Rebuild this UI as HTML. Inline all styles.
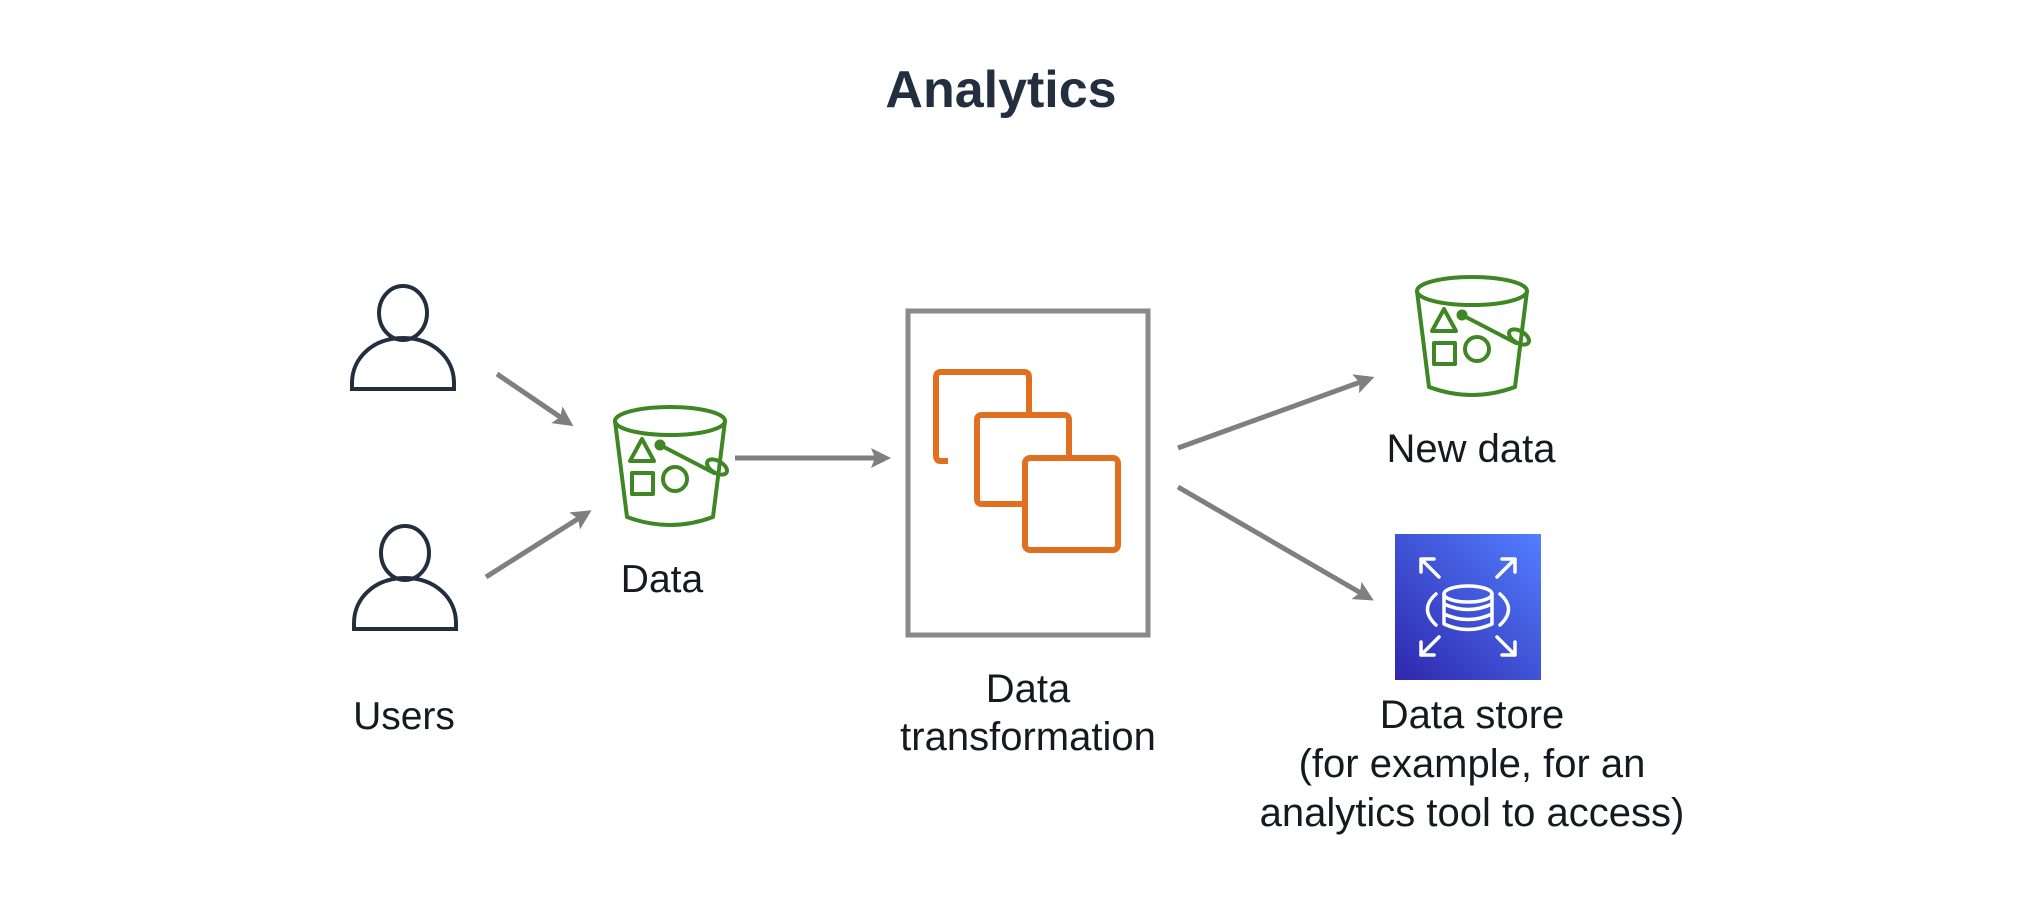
<!DOCTYPE html>
<html><head><meta charset="utf-8"><style>
html,body{margin:0;padding:0;background:#fff;width:2036px;height:909px;overflow:hidden}
svg{display:block}
text{font-family:"Liberation Sans",sans-serif;fill:#16191f}
</style></head><body>
<svg width="2036" height="909" viewBox="0 0 2036 909" xmlns="http://www.w3.org/2000/svg">
<defs>
<marker id="ah" markerWidth="4" markerHeight="4" refX="2.2" refY="2" orient="auto" markerUnits="strokeWidth">
<path d="M0,0 L4,2 L0,4 L0.8,2 Z" fill="#7f7f7f"/></marker>
<linearGradient id="bg" x1="0" y1="1" x2="1" y2="0">
<stop offset="0" stop-color="#2e27ad"/><stop offset="1" stop-color="#527fff"/></linearGradient>
<g id="bucket" fill="none" stroke="#3f8624" stroke-width="4" stroke-linejoin="round" stroke-linecap="round">
<ellipse cx="58" cy="16" rx="55" ry="14"/>
<path d="M3,16 L15,112 Q58,128 101,112 L113,16"/>
<path d="M30,34 L18,56 L42,56 Z"/>
<rect x="20" y="68" width="21" height="21"/>
<circle cx="63" cy="74" r="12"/>
<circle cx="48" cy="40" r="3.5" fill="#3f8624"/>
<path d="M48,40 L102,68"/>
<ellipse cx="105" cy="62" rx="11" ry="6" transform="rotate(30 105 62)"/>
</g>
<g id="user" fill="none" stroke="#232f3e" stroke-width="4">
<ellipse cx="0" cy="0" rx="24" ry="27"/>
<path d="M-51,76 L51,76 L51,70 C51,45 30,25 0,25 C-30,25 -51,45 -51,70 Z"/>
</g>
</defs>

<text x="1001" y="107" text-anchor="middle" font-size="52" font-weight="bold" style="fill:#232f3e">Analytics</text>

<use href="#user" x="403" y="313"/>
<use href="#user" x="405" y="553"/>
<text x="404" y="729" text-anchor="middle" font-size="39">Users</text>

<g stroke="#7f7f7f" stroke-width="5" fill="none" marker-end="url(#ah)">
<line x1="497" y1="374" x2="566" y2="421"/>
<line x1="486" y1="577" x2="584" y2="515"/>
<line x1="735" y1="458" x2="882" y2="458"/>
<line x1="1178" y1="448" x2="1366" y2="380"/>
<line x1="1178" y1="487" x2="1366" y2="596"/>
</g>

<use href="#bucket" x="612" y="405"/>
<text x="662" y="592" text-anchor="middle" font-size="39">Data</text>

<rect x="908" y="311" width="240" height="324" fill="none" stroke="#8a8a8a" stroke-width="5"/>
<g fill="none" stroke="#e07020" stroke-width="6" stroke-linejoin="round">
<path d="M948,461 L940,461 Q936,461 936,455 L936,377 Q936,372 941,372 L1024,372 Q1029,372 1029,377 L1029,413"/>
<path d="M1024,504 L982,504 Q977,504 977,499 L977,420 Q977,415 982,415 L1064,415 Q1069,415 1069,420 L1069,457"/>
<rect x="1025" y="458" width="93" height="92" rx="5"/>
</g>
<text x="1028" y="702" text-anchor="middle" font-size="40">Data</text>
<text x="1028" y="750" text-anchor="middle" font-size="40">transformation</text>

<use href="#bucket" x="1414" y="275"/>
<text x="1471" y="462" text-anchor="middle" font-size="40">New data</text>

<rect x="1395" y="534" width="146" height="146" fill="url(#bg)"/>
<g fill="none" stroke="#fff" stroke-width="3.5" stroke-linecap="round" stroke-linejoin="round" transform="translate(1395,534)">
<path d="M26,25 L44,43 M26,25 L26,38 M26,25 L39,25"/>
<path d="M120,25 L102,43 M120,25 L120,38 M120,25 L107,25"/>
<path d="M26,121 L44,103 M26,121 L26,108 M26,121 L39,121"/>
<path d="M120,121 L102,103 M120,121 L120,108 M120,121 L107,121"/>
<ellipse cx="73" cy="60" rx="24" ry="8"/>
<path d="M49,60 L49,90 Q73,101 97,90 L97,60 M49,70 Q73,81 97,70 M49,80 Q73,91 97,80"/>
<path d="M41,60 Q24,75 41,91"/>
<path d="M105,60 Q122,75 105,91"/>
</g>
<text x="1472" y="728" text-anchor="middle" font-size="40">Data store</text>
<text x="1472" y="777" text-anchor="middle" font-size="40">(for example, for an</text>
<text x="1472" y="826" text-anchor="middle" font-size="40">analytics tool to access)</text>
</svg>
</body></html>
